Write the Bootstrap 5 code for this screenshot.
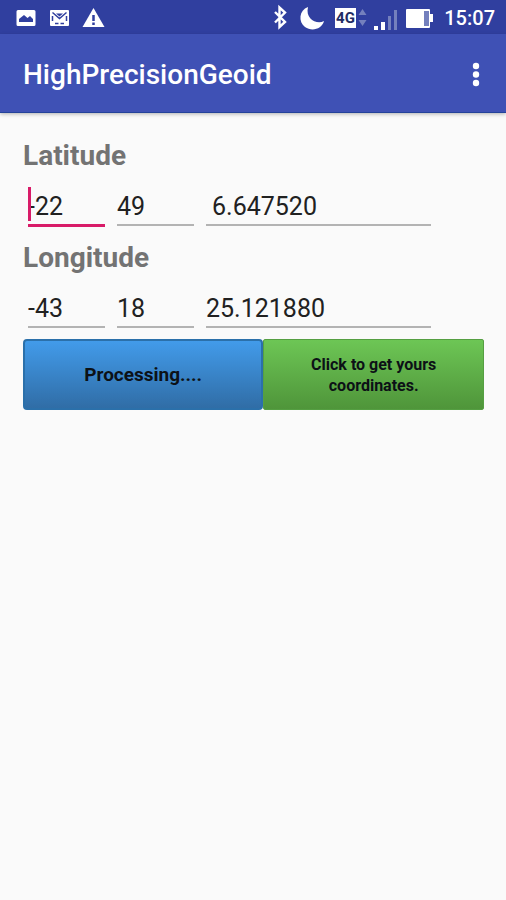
<!DOCTYPE html>
<html lang="en">
<head>
<meta charset="utf-8">
<meta name="viewport" content="width=device-width, initial-scale=1">
<title>HighPrecisionGeoid</title>
<link href="https://cdn.jsdelivr.net/npm/bootstrap@5.3.0/dist/css/bootstrap.min.css" rel="stylesheet">
<style>
body { font-family: Roboto, "Liberation Sans", sans-serif; background: #fafafa; }
.status-bar { height: 34px; background: #303f9f; color: #fff; padding: 2px 11px 0 16px; }
.clock { font-size: 20px; line-height: 34px; font-weight: 500; margin-left: 10px; }
.app-bar { height: 78px; background: #3f51b5; padding: 3px 15px 0 23px; box-shadow: 0 1px 0 #24439a, 0 2px 4px rgba(0,0,0,.3); }
.app-title { font-size: 28px; line-height: 36px; font-weight: 500; color: #fff; }
.menu-btn { line-height: 0; }
.content { padding: 26px 22px 0 23px; }
.axis { font-size: 28px; line-height: 36px; font-weight: 700; color: #737373; }
.fields { gap: 12px; padding: 0 53px 0 5px; height: 66px; }
.fields-last { height: 63px; }
.field { position: relative; flex: 77 1 0; min-width: 0; }
.field-wide { flex-grow: 225; }
.field input { width: 100%; height: 52px; padding: 14px 0 0; border: 0; border-bottom: 2px solid #b3b3b3; border-radius: 0; background: transparent; color: #212121; font-size: 25px; line-height: 36px; outline: 0; }
.field .active-input { border-bottom: 3px solid #d81b68; height: 53px; }
.field .indented { padding-left: 6px; }
.caret { position: absolute; left: 0; top: 13px; width: 3px; height: 34px; background: #d81b68; }
.actions { height: 71px; }
.action { border-radius: 4px; color: #0c1116; font-weight: 700; padding: 0; }
.action-blue { flex: 240 1 0; font-size: 19px; line-height: 22px; border: 2px solid #2b70aa; background: linear-gradient(#429bea, #306da6); }
.action-green { flex: 222 1 0; font-size: 16px; line-height: 21px; border: 1px solid #559f42; background: linear-gradient(#6dc655, #4f953a); border-radius: 2px; }
</style>
<script defer src="https://cdn.jsdelivr.net/npm/bootstrap@5.3.0/dist/js/bootstrap.bundle.min.js"></script>
</head>
<body>
<header>
  <div class="status-bar d-flex align-items-center">
    <svg width="90" height="26" viewBox="0 0 90 26" aria-hidden="true">
      <path fill="#fff" fill-rule="evenodd" d="M2 5h16q1.500 0 1.500 1.500v13q0 1.500-1.500 1.500H2Q.5 21 .5 19.500v-13Q.5 5 2 5zM3 17h14v-3l-3-3-2.500 2L8 10l-5 4z"/>
      <rect x="34" y="5" width="19" height="16" rx="1" fill="#fff"/>
      <path d="M36.500 7.500l7 6 7-6M36.500 11v5M50.500 11v5M39 18.500h3.500M44.500 18.500h3.500" fill="none" stroke="#303f9f" stroke-width="1.500"/>
      <path d="M40 8.500h7l-3.500 3z" fill="#303f9f"/>
      <path d="M77.500 3L88.500 22h-22z" fill="#fff"/>
      <path d="M77.500 10v6M77.500 17.500v2.500" stroke="#303f9f" stroke-width="2.500"/>
    </svg>
    <svg class="ms-auto" width="162" height="28" viewBox="0 0 162 28" aria-hidden="true">
      <path d="M3 8l10 10-5.500 5V3.500L13 8.500 3 18.500" fill="none" stroke="#fff" stroke-width="2.400"/>
      <path d="M36 3C27 6 26 18 33 23C40 28 50 25 52 17C45 21 33 15 36 3z" fill="#fff"/>
      <rect x="63" y="4" width="21" height="20" fill="#fff"/>
      <text x="73.500" y="19" text-anchor="middle" font-family="Roboto, sans-serif" font-size="15" font-weight="700" fill="#222c63">4G</text>
      <path d="M86.500 11l4-6 4 6zM86.500 16l4 6 4-6z" fill="#7480bd"/>
      <path d="M102 22h4v4h-4zM109 18h4v8h-4z" fill="#fff"/>
      <path d="M116 12h3v14h-3zM122 6h3v20h-3z" fill="#7480bd"/>
      <path d="M135 5h22q1 0 1 1v4h3v8h-3v5q0 1-1 1h-22q-1 0-1-1V6q0-1 1-1z" fill="#fff"/>
      <rect x="152" y="7" width="5" height="15" fill="#7480bd"/>
    </svg>
    <span class="clock">15:07</span>
  </div>
  <nav class="app-bar d-flex align-items-center justify-content-between">
    <h1 class="app-title m-0">HighPrecisionGeoid</h1>
    <button type="button" class="menu-btn btn p-0 border-0" aria-label="More options">
      <svg width="30" height="30" viewBox="0 0 30 30" fill="#fff" aria-hidden="true"><circle cx="15" cy="6" r="3.200"/><circle cx="15" cy="14.500" r="3.200"/><circle cx="15" cy="23" r="3.200"/></svg>
    </button>
  </nav>
</header>
<main class="content">
  <h2 class="axis m-0">Latitude</h2>
  <div class="fields d-flex">
    <div class="field"><input class="active-input" type="text" aria-label="Latitude degrees" value="-22"><span class="caret"></span></div>
    <div class="field"><input type="text" aria-label="Latitude minutes" value="49"></div>
    <div class="field field-wide"><input class="indented" type="text" aria-label="Latitude seconds" value="6.647520"></div>
  </div>
  <h2 class="axis m-0">Longitude</h2>
  <div class="fields fields-last d-flex">
    <div class="field"><input type="text" aria-label="Longitude degrees" value="-43"></div>
    <div class="field"><input type="text" aria-label="Longitude minutes" value="18"></div>
    <div class="field field-wide"><input type="text" aria-label="Longitude seconds" value="25.121880"></div>
  </div>
  <div class="actions d-flex">
    <button type="button" class="action action-blue">Processing....</button>
    <button type="button" class="action action-green">Click to get yours<br>coordinates.</button>
  </div>
</main>
</body>
</html>
